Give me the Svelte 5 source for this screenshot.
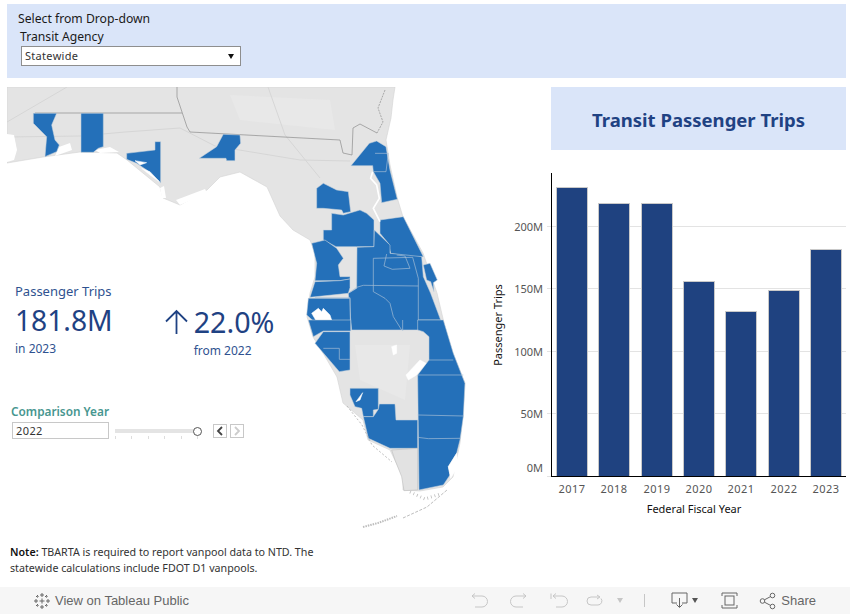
<script>
const bars = [
  { year: 2017, top: 188, x: 557 },
  { year: 2018, top: 204, x: 599 },
  { year: 2019, top: 204, x: 642 },
  { year: 2020, top: 282, x: 684 },
  { year: 2021, top: 312, x: 726 },
  { year: 2022, top: 291, x: 769 },
  { year: 2023, top: 250, x: 811 }
];
const grid = [
  { label: '200M', y: 226, dy: 5 },
  { label: '150M', y: 288, dy: 5 },
  { label: '100M', y: 351, dy: 5 },
  { label: '50M', y: 413, dy: 5 },
  { label: '0M', y: 476, dy: -4 }
];
const ticks = [115, 131, 148, 164, 181, 197];

const land = '7,87 395,87 393,100 391,118 386,140 390,165 397,197 403,217 423,253 437,293 445,327 453,353 465,383 463,415 460,443 453,477 443,487 420,491 403,490 403,477 390,450 368,440 363,420 343,403 337,377 323,353 313,337 308,320 307,317 310,293 315,277 315,253 310,240 293,230 280,216 267,187 240,172 220,177 207,190 180,205 163,198 160,187 127,160 117,153 80,152 43,157 7,163';

// county shapes, traced at 3x so the groups below scale them back down
const north = [
  '100,340 170,340 155,375 165,420 178,435 170,455 135,470 140,410 100,370',
  '243,340 310,340 310,440 295,445 280,457 243,457',
  '380,460 465,450 465,425 482,425 482,548 440,510 410,490 380,478',
  '670,403 720,405 722,430 705,450 705,482 680,482 678,475 598,475 650,440'
];
const central = [
  '213,107 268,40 290,33 318,50 330,120 352,208 305,218 300,160 280,125 278,107',
  '110,175 130,160 170,180 205,185 212,245 190,250 185,240 130,235 110,235',
  '155,250 190,255 240,240 260,250 282,270 282,350 230,350 168,350 130,330 130,300 155,300',
  '95,340 135,330 170,355 190,385 175,405 180,440 210,440 210,447 180,452 105,452 110,400',
  '300,270 370,260 430,380 398,382 332,370 325,340 300,310',
  '231,352 282,350 283,300 330,345 330,370 425,380 430,440 452,490 482,570 498,600 215,600 205,490 230,475',
  '105,455 180,452 210,447 210,473 205,490 90,502',
  '85,505 210,505 212,600 120,600 108,580 80,555'
];
const centralLines = [
  '280,485 280,385 398,382 415,445 415,570 480,570',
  '205,490 230,472 250,466 415,468',
  '320,372 312,408 337,418 390,415 375,378 350,375',
  '280,485 315,505 330,520 340,560 365,600',
  '285,70 325,70 318,125 280,125',
  '105,503 210,503 212,600'
];
const south = [
  '130,35 210,35 210,150 178,155 105,70',
  '85,0 212,0 212,33 130,33 100,50',
  '413,0 490,0 520,100 555,190 550,290 540,360 530,400 505,440 510,465 490,495 417,510 413,165 447,120 447,50 430,35 413,30',
  '210,205 295,205 295,268 280,270 280,290 250,290 245,265 225,260 210,225',
  '250,290 280,290 295,268 298,252 345,252 348,300 413,300 413,385 330,385 265,355'
];
const southLines = [
  '413,165 550,165',
  '447,120 520,120',
  '413,285 550,288',
  '413,352 445,356 540,355',
  '130,85 178,85 178,118 210,118',
  '368,0 368,33'
];
</script>

<div class="page">
  <header class="filters">
    <div class="filters-title">Select from Drop-down</div>
    <div class="agency-label">Transit Agency</div>
    <div class="select">
      <span>Statewide</span>
      <i class="caret"></i>
    </div>
  </header>

  <main class="main">
    <svg class="map" width="483" height="445" viewBox="7 87 483 445">
      <polygon points={land} fill="#e4e4e4" stroke="#d4d4d4" stroke-width="0.6" />
      <g fill="#e8e8e8">
        <polygon points="230,95 330,100 335,130 240,120" />
        <polygon points="355,345 410,345 405,400 360,380" />
      </g>
      <g fill="none" stroke="#d6d6d6" stroke-width="1">
        <path d="M7 122 L67 87" />
        <path d="M7 137 L80 136 L125 132 L180 128 L215 146 L300 160 L350 161" />
        <path d="M268 87 L285 135 L320 178" />
      </g>
      <g fill="none" stroke="#8c8c8c" stroke-width="0.7">
        <path d="M35 113 L182 113" />
        <path d="M177 87 L177 97 L187 127 L190 132 L340 140 L343 153 L352 155 L353 128 L360 124 L377 133" />
        <path d="M385 90 L378 108 L383 122 L377 133" stroke-dasharray="2 1" />
      </g>
      <g fill="#fff">
        <polygon points="7,134 14,135 17,150 14,160 7,162" />
        <polygon points="59,147 70,143 72,150 55,156" />
        <polygon points="95,150 110,147 119,152 100,153" />
        <polygon points="160,188 164,186 166,198 162,198" />
        <polygon points="176,200 205,189 207,193 180,205" />
      </g>
      <g class="counties" transform="scale(0.3333)">
        {#each north as pts}<polygon points={pts} />{/each}
        <polygon class="hole" points="405,482 440,488 420,495" />
        <polygon class="hole" points="425,505 450,515 478,545 450,525" />
      </g>
      <g class="counties" transform="translate(280 130) scale(0.3333)">
        {#each central as pts}<polygon points={pts} />{/each}
        {#each centralLines as pts}<polyline class="line" points={pts} />{/each}
        <polyline class="river" points="278,125 272,145 290,165 298,205 280,235 300,275" />
        <polygon class="hole" points="95,550 110,575 130,590 155,570 150,555 130,535 125,545 115,535" />
        <polygon points="430,405 450,400 472,450 460,458 462,485 452,455 440,450" />
      </g>
      <g class="counties" transform="translate(280 320) scale(0.3333)">
        {#each south as pts}<polygon points={pts} />{/each}
        {#each southLines as pts}<polyline class="line" points={pts} />{/each}
        <polygon class="patch" points="335,390 413,385 413,510 372,512 365,470 345,420" />
        <polygon class="hole" points="228,245 248,218 240,240" />
        <polygon class="hole" points="335,80 350,75 350,100 340,105" />
        <polygon class="hole" points="378,165 420,120 438,130 410,165 385,180" />
        <polygon class="hole" points="530,400 534,440 512,475 505,440" />
      </g>
      <g fill="none" stroke="#bdbdbd">
        <path d="M363 527 L378 523 L397 516" stroke-width="2" stroke-dasharray="1.5 1" />
        <path d="M403 518 L427 507 L447 490" stroke-dasharray="3 1.5" />
        <path d="M410 492 L425 499 L440 494" stroke-width="3" stroke-dasharray="0.8 3" />
        <path d="M347 406 L362 425 L372 445 L392 462" stroke-dasharray="2 2" />
      </g>
    </svg>

    <section class="kpis">
      <div class="kpi">
        <div class="kpi-head">Passenger Trips</div>
        <div class="kpi-value">181.8M</div>
        <div class="kpi-sub">in 2023</div>
      </div>
      <div class="kpi change">
        <svg class="arrow" width="23" height="26" viewBox="0 0 23 26">
          <path d="M11.5 25 V2 M1 12.5 L11.5 2 L22 12.5" fill="none" stroke="#1f4283" stroke-width="1.8" />
        </svg>
        <div>
          <div class="kpi-value wide">22.0%</div>
          <div class="kpi-sub">from 2022</div>
        </div>
      </div>
    </section>

    <section class="compare">
      <div class="compare-label">Comparison Year</div>
      <div class="compare-row">
        <div class="year-box">2022</div>
        <div class="slider">
          <div class="track"></div>
          <div class="handle"></div>
          <div class="slider-ticks">
            {#each ticks as t}<i></i>{/each}
          </div>
        </div>
        <div class="step">
          <svg width="8" height="10" viewBox="0 0 8 10"><path d="M6 1 L2 5 L6 9" fill="none" stroke="#444" stroke-width="1.8" /></svg>
        </div>
        <div class="step off">
          <svg width="8" height="10" viewBox="0 0 8 10"><path d="M2 1 L6 5 L2 9" fill="none" stroke="#ccc" stroke-width="1.8" /></svg>
        </div>
      </div>
    </section>

    <div class="right">
      <div class="title-wrap"><h1>Transit Passenger Trips</h1></div>
      <svg class="chart" width="360" height="375" viewBox="490 157 360 375">
        {#each grid as g}
          <line x1="547" x2="846" y1={g.y + 0.5} y2={g.y + 0.5} stroke="#e3e3e3" />
          <text class="tick" x="543" y={g.y + g.dy} text-anchor="end">{g.label}</text>
        {/each}
        {#each bars as b}
          <rect x={b.x - 0.5} y={b.top - 0.5} width="31" height={477 - b.top} fill="#1f4280" stroke="#c9c9c9" />
          <text class="tick year" x={b.x + 15} y="493" text-anchor="middle">{b.year}</text>
        {/each}
        <line x1="551.5" x2="551.5" y1="173" y2="477" stroke="#000" />
        <line x1="551" x2="846" y1="476.5" y2="476.5" stroke="#000" />
        <text class="axis-title" x="694" y="513" text-anchor="middle">Federal Fiscal Year</text>
        <text class="axis-title" transform="translate(502 325) rotate(-90)" text-anchor="middle">Passenger Trips</text>
      </svg>
    </div>
  </main>

  <p class="note"><b>Note:</b> TBARTA is required to report vanpool data to NTD. The<br />statewide calculations include FDOT D1 vanpools.</p>

  <footer class="toolbar">
    <div class="public">
      <svg width="18" height="18" viewBox="0 0 18 18" fill="none" stroke="#666" stroke-width="1">
        <path d="M9 1 V5 M7 3 H11 M9 13 V17 M7 15 H11 M1 9 H5 M3 7 V11 M13 9 H17 M15 7 V11" />
        <path d="M9 6.5 V11.5 M6.5 9 H11.5" />
        <path d="M4.5 3 V6 M3 4.5 H6 M13.5 3 V6 M12 4.5 H15 M4.5 12 V15 M3 13.5 H6 M13.5 12 V15 M12 13.5 H15" stroke-dasharray="1 .6" />
      </svg>
      <span>View on Tableau Public</span>
    </div>
    <div class="actions">
      <svg class="dim" width="18" height="16" viewBox="0 0 18 16"><path d="M2 3 H12 A5.5 5.5 0 0 1 12 14 H5 M5 0.5 L2 3 L5 5.5" /></svg>
      <svg class="dim redo" width="18" height="16" viewBox="0 0 18 16"><path d="M16 3 H6 A5.5 5.5 0 0 0 6 14 H13 M13 0.5 L16 3 L13 5.5" /></svg>
      <svg class="dim revert" width="18" height="16" viewBox="0 0 18 16"><path d="M1 0.5 V6 M3 3 H12 A5.5 5.5 0 0 1 12 14 H6 M6 0.5 L3 3 L6 5.5" /></svg>
      <svg class="dim refresh" width="18" height="14" viewBox="0 0 18 14"><path d="M13 3 H5 A4 4 0 0 0 5 11 H12 A4 4 0 0 0 15 4.5 M11 1 L14 3 L11 5" /></svg>
      <i class="tri light"></i>
      <i class="sep"></i>
      <svg class="dark download" width="17" height="17" viewBox="0 0 17 17"><path d="M6 11 H1 V1 H16 V11 H11 M8.5 6 V15 M5.5 12.5 L8.5 15.5 L11.5 12.5" /></svg>
      <i class="tri"></i>
      <svg class="dark full" width="17" height="17" viewBox="0 0 17 17"><path d="M1 4 V1 H16 V4 M1 13 V16 H16 V13" /><rect x="4" y="4" width="9" height="9" /></svg>
      <svg class="dark share" width="18" height="18" viewBox="0 0 18 18"><circle cx="3.5" cy="9" r="2.3" /><circle cx="13.5" cy="3.5" r="2.3" /><circle cx="13.5" cy="14.5" r="2.3" /><path d="M5.5 7.8 L11.5 4.6 M5.5 10.2 L11.5 13.4" /></svg>
      <span class="share-text">Share</span>
    </div>
  </footer>
</div>

<style>
:global(body) {
  background: #fff;
}
.page {
  width: 850px;
  height: 614px;
  padding-top: 4px;
  box-sizing: border-box;
  display: flex;
  flex-direction: column;
  overflow: hidden;
  font-family: "Noto Sans", "Open Sans", sans-serif;
}
.filters {
  height: 74px;
  margin: 0 4px 9px 7px;
  padding: 6px 0 0 11px;
  box-sizing: border-box;
  background: #dae5f9;
  color: #1a1a1a;
  font-size: 12.2px;
  line-height: 18px;
}
.agency-label {
  margin-left: 2px;
}
.select {
  width: 220px;
  height: 20px;
  margin: 0 0 0 3px;
  padding: 0 5px 0 3px;
  box-sizing: border-box;
  background: #fff;
  border: 1px solid #8e8e8e;
  font-size: 11px;
  line-height: 16px;
  color: #333;
  letter-spacing: 0.3px;
  display: flex;
  align-items: center;
  justify-content: space-between;
}
.caret {
  width: 0;
  height: 0;
  margin-right: 1px;
  border-left: 3.5px solid transparent;
  border-right: 3.5px solid transparent;
  border-top: 5px solid #111;
}
.main {
  position: relative;
  height: 445px;
  padding-left: 7px;
  display: flex;
}
.map {
  flex: none;
}
.counties polygon {
  fill: #2470b9;
  stroke: #c9d3dd;
  stroke-width: 1.6;
}
.counties .line {
  fill: none;
  stroke: #a9bfd6;
  stroke-width: 2;
}
.counties .hole {
  fill: #fff;
  stroke: #fff;
}
.counties .patch {
  fill: #e2e2e2;
  stroke: #b9b9b9;
}
.river {
  fill: none;
  stroke: #fff;
  stroke-width: 5;
}
.kpis {
  position: absolute;
  left: 15px;
  top: 195px;
  display: flex;
  gap: 52px;
  color: #1f4283;
}
.kpi-head {
  font-size: 13px;
  line-height: 18px;
  color: #2f5290;
}
.kpi-value {
  font-size: 28.2px;
  line-height: 36px;
  margin-top: 2px;
}
.kpi-value.wide {
  font-size: 28.7px;
}
.kpi-sub {
  font-size: 12px;
  line-height: 18px;
  margin-top: 2px;
  color: #2f5290;
}
.change {
  display: flex;
  align-items: flex-start;
  gap: 6px;
  padding-top: 20px;
}
.arrow {
  margin-top: 7px;
}
.compare {
  position: absolute;
  left: 11px;
  top: 316px;
}
.compare-label {
  font-size: 11.8px;
  font-weight: 600;
  line-height: 17px;
  color: #47968f;
}
.compare-row {
  display: flex;
  align-items: center;
  margin: 2px 0 0 1px;
}
.year-box {
  width: 97px;
  height: 17px;
  padding-left: 3px;
  box-sizing: border-box;
  border: 1px solid #c8c8c8;
  font-size: 11px;
  line-height: 15px;
  letter-spacing: 0.4px;
  color: #333;
}
.slider {
  position: relative;
  width: 87px;
  height: 17px;
  margin: 0 11px 0 6px;
}
.track {
  position: absolute;
  left: 0;
  right: 4px;
  top: 7px;
  height: 4px;
  background: #e4e4e4;
}
.handle {
  position: absolute;
  right: 0;
  top: 5px;
  width: 7px;
  height: 7px;
  border: 1px solid #555;
  border-radius: 50%;
  background: #fff;
}
.slider-ticks {
  position: absolute;
  left: 0;
  right: 4px;
  top: 14px;
  display: flex;
  justify-content: space-between;
}
.slider-ticks i {
  width: 1px;
  height: 3px;
  background: #ddd;
}
.step {
  width: 12px;
  height: 12px;
  margin-right: 3px;
  border: 1px solid #c8c8c8;
  display: flex;
  align-items: center;
  justify-content: center;
}
.right {
  flex: none;
  margin-left: 0;
  width: 360px;
}
.title-wrap {
  height: 63px;
  margin: 0 4px 7px 61px;
  padding-top: 2px;
  box-sizing: border-box;
  background: #dae5f9;
  display: flex;
  align-items: center;
  justify-content: center;
}
h1 {
  margin: 0;
  font-size: 18.5px;
  font-weight: 700;
  color: #1f4283;
}
.chart {
  display: block;
}
.tick {
  font-size: 11px;
  fill: #555;
  font-family: "Noto Sans", sans-serif;
}
.year {
  letter-spacing: 0.4px;
}
.axis-title {
  font-size: 11px;
  fill: #111;
  font-family: "Noto Sans", sans-serif;
}
.note {
  margin: 12px 0 0 10px;
  font-size: 10.7px;
  line-height: 16px;
  color: #333;
}
.note b {
  font-weight: 600;
  color: #111;
}
.toolbar {
  margin-top: auto;
  height: 27px;
  flex: none;
  background: #f6f6f6;
  display: flex;
  align-items: center;
  justify-content: space-between;
  color: #666;
  font-family: "Liberation Sans", sans-serif;
  font-size: 13px;
}
.public {
  display: flex;
  align-items: center;
  gap: 4px;
  margin-left: 33px;
}
.actions {
  display: flex;
  align-items: center;
  margin-right: 34px;
}
.actions svg {
  flex: none;
  fill: none;
  stroke-width: 1;
}
.dim {
  stroke: #c6c6c6;
}
.redo {
  margin-left: 22px;
}
.revert {
  margin-left: 22px;
}
.refresh {
  margin-left: 18px;
}
.dark {
  stroke: #666;
}
.tri {
  width: 0;
  height: 0;
  margin-left: 4px;
  border-left: 3.5px solid transparent;
  border-right: 3.5px solid transparent;
  border-top: 5px solid #555;
}
.tri.light {
  margin-left: 13px;
  border-top-color: #c6c6c6;
}
.sep {
  width: 1px;
  height: 13px;
  margin: 0 26px 0 21px;
  background: #c6c6c6;
}
.full {
  margin-left: 23px;
}
.share {
  margin-left: 21px;
}
.share-text {
  margin-left: 4px;
}
</style>
